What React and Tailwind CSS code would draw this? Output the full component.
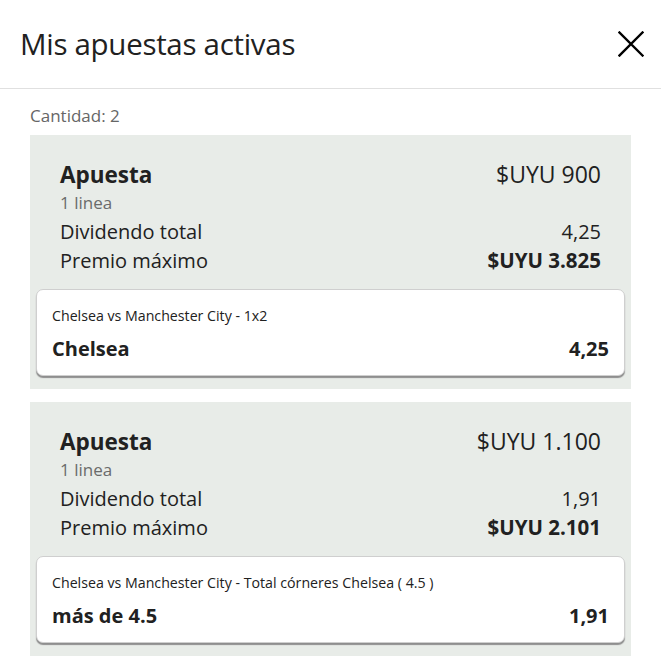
const bets = [
  {
    stake: '$UYU 900',
    lines: '1 linea',
    odds: '4,25',
    prize: '$UYU 3.825',
    market: 'Chelsea vs Manchester City - 1x2',
    pick: 'Chelsea',
  },
  {
    stake: '$UYU 1.100',
    lines: '1 linea',
    odds: '1,91',
    prize: '$UYU 2.101',
    market: 'Chelsea vs Manchester City - Total córneres Chelsea ( 4.5 )',
    pick: 'más de 4.5',
  },
];

export default function App() {
  return (
    <div className="w-[661px] h-[672px] bg-white text-[#212121] overflow-hidden" style={{ fontFamily: '"Open Sans", "Noto Sans", sans-serif' }}>
      {/* Header */}
      <div className="flex items-center justify-between h-[89px] pl-5 pr-[17px] border-b border-[#e0e0e0]">
        <h1 className="text-[29.5px] font-normal leading-none tracking-[-0.3px]">Mis apuestas activas</h1>
        <button className="text-black">
          <svg width="26" height="26" viewBox="0 0 26 26" fill="none" stroke="currentColor" strokeWidth="2.4" strokeLinecap="square">
            <path d="M1.5 1.5 L24.5 24.5 M24.5 1.5 L1.5 24.5" />
          </svg>
        </button>
      </div>

      <div className="px-[30px]">
        <p className="text-[17px] text-[#666] leading-[24px] pt-[15px] pb-[7px]">Cantidad: 2</p>

        <div className="flex flex-col gap-[13px]">
          {bets.map((b, i) => (
            <div key={i} className="bg-[#e8ece8] px-[6px] pt-[24px] pb-[13px]">
              <div className="px-6 pb-[14px]">
                <div className="flex justify-between items-baseline">
                  <span className="text-[22.5px] font-bold leading-[30px]">Apuesta</span>
                  <span className="text-[23px] leading-[30px]">{b.stake}</span>
                </div>
                <p className="text-[17px] text-[#6b6b6b] leading-[20px] mt-[3px]">{b.lines}</p>
                <div className="flex justify-between text-[20px] leading-[29px] mt-[4px]">
                  <span>Dividendo total</span>
                  <span>{b.odds}</span>
                </div>
                <div className="flex justify-between text-[20px] leading-[29px]">
                  <span>Premio máximo</span>
                  <span className="font-bold text-[20.5px]">{b.prize}</span>
                </div>
              </div>
              <div className="bg-white rounded-[7px] border border-[#cfcfcf] shadow-[0_2px_1px_#8e8e8e] px-[15px] pt-[16px] pb-[12px]">
                <p className="text-[14.2px] leading-[20px]">{b.market}</p>
                <div className="flex justify-between text-[20px] font-bold leading-[28px] mt-[9px]">
                  <span>{b.pick}</span>
                  <span>{b.odds}</span>
                </div>
              </div>
            </div>
          ))}
        </div>
      </div>
    </div>
  );
}
